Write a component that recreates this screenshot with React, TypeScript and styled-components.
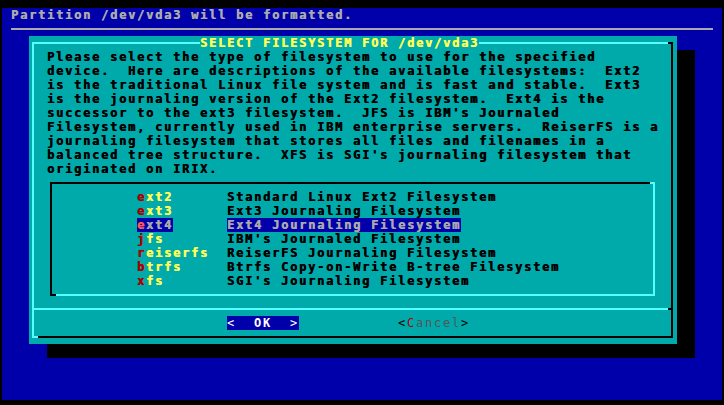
import React from "react";
import styled, { createGlobalStyle } from "styled-components";

const BLUE = "#0000aa";
const TEAL = "#00aaaa";
const LIGHT = "#55ffff";
const YELLOW = "#ffff55";
const GRAY = "#aaaaaa";
const RED = "#aa0000";
const LRED = "#ff5555";

const GlobalStyle = createGlobalStyle`
  html, body { margin: 0; padding: 0; background: #000; }
  body {
    width: 724px; height: 405px; overflow: hidden;
    font-family: "DejaVu Sans Mono", "Liberation Mono", monospace;
  }
`;

const Screen = styled.div`
  margin: 8px 0 0 2px;
  width: 720px;
  height: 392px;
  background: ${BLUE};
  display: flex;
  flex-direction: column;
  font-size: 12px;
  line-height: 14px;
  letter-spacing: 1.776px;
  font-weight: bold;
  white-space: pre;
  text-shadow: 0.6px 0 0 currentColor;
`;

const Backtitle = styled.div`
  height: 14px;
  padding-left: 9px;
  color: ${GRAY};
`;

const Rule = styled.div`
  height: 14px;
  display: flex;
  align-items: flex-start;
  padding: 0 9px;
  &::before {
    content: "";
    flex: 1;
    margin-top: 6px;
    height: 2px;
    background: ${GRAY};
  }
`;

const Dialog = styled.div`
  margin-left: 27px;
  width: 648px;
  height: 308px;
  box-sizing: border-box;
  padding: 6px 4px 6px 3px;
  background: ${TEAL};
  box-shadow: 18px 14px 0 0 #000;
  display: flex;
`;

const Frame = styled.div`
  flex: 1;
  position: relative;
  border-style: solid;
  border-width: 2px;
  border-color: ${LIGHT} #000 #000 ${LIGHT};
  display: flex;
  flex-direction: column;
  &::before {
    content: "";
    position: absolute;
    top: -2px;
    right: -2px;
    width: 5px;
    height: 2px;
    background: #000;
  }
  &::after {
    content: "";
    position: absolute;
    bottom: -2px;
    left: -2px;
    width: 6px;
    height: 2px;
    background: ${LIGHT};
  }
`;

const TitleRow = styled.div`
  height: 14px;
  margin-top: -8px;
  padding-left: 166px;
  display: flex;
`;

const Title = styled.span`
  background: ${TEAL};
  color: ${YELLOW};
`;

const Prose = styled.div`
  height: 126px;
  padding-left: 13px;
  color: #000;
`;

const ListArea = styled.div`
  height: 126px;
  width: 612px;
  margin-left: 13px;
  box-sizing: border-box;
  padding: 6px 4px 6px 3px;
  display: flex;
`;

const ListFrame = styled.div`
  flex: 1;
  position: relative;
  border-style: solid;
  border-width: 2px;
  border-color: #000 ${LIGHT} ${LIGHT} #000;
  padding-top: 6px;
  display: flex;
  flex-direction: column;
  &::before {
    content: "";
    position: absolute;
    top: -2px;
    right: -2px;
    width: 5px;
    height: 2px;
    background: ${LIGHT};
  }
  &::after {
    content: "";
    position: absolute;
    bottom: -2px;
    left: -2px;
    width: 6px;
    height: 2px;
    background: #000;
  }
`;

const Item = styled.div`
  height: 14px;
  padding-left: 85px;
  display: flex;
`;

const NameCell = styled.div`
  width: 90px;
  flex: none;
`;

const Name = styled.span<{ $sel: boolean }>`
  background: ${(p) => (p.$sel ? BLUE : "transparent")};
  color: ${(p) => (p.$sel ? GRAY : YELLOW)};
`;

const Hot = styled.span<{ $sel: boolean }>`
  color: ${(p) => (p.$sel ? LRED : RED)};
`;

const Desc = styled.span<{ $sel: boolean }>`
  background: ${(p) => (p.$sel ? BLUE : "transparent")};
  color: ${(p) => (p.$sel ? GRAY : "#000")};
`;

const Separator = styled.div`
  height: 14px;
  margin: 0 -2px;
  display: flex;
  align-items: flex-start;
`;

const SepLight = styled.div`
  flex: 1;
  margin-top: 6px;
  height: 2px;
  background: ${LIGHT};
`;

const SepDark = styled.div`
  width: 5px;
  margin-top: 6px;
  height: 2px;
  background: #000;
`;

const ButtonRow = styled.div`
  height: 14px;
  padding-left: 193px;
  display: flex;
  gap: 99px;
  font-weight: normal;
  text-shadow: none;
`;

const Button = styled.div<{ $active: boolean }>`
  width: 72px;
  height: 14px;
  background: ${(p) => (p.$active ? BLUE : "transparent")};
  color: ${(p) => (p.$active ? "#fff" : "#000")};
`;

const Label = styled.span<{ $active: boolean }>`
  color: ${(p) => (p.$active ? "#fff" : "#555555")};
  font-weight: ${(p) => (p.$active ? "bold" : "normal")};
`;

const Key = styled.span`
  color: ${RED};
`;

const proseLines = [
  "Please select the type of filesystem to use for the specified",
  "device.  Here are descriptions of the available filesystems:  Ext2",
  "is the traditional Linux file system and is fast and stable.  Ext3",
  "is the journaling version of the Ext2 filesystem.  Ext4 is the",
  "successor to the ext3 filesystem.  JFS is IBM's Journaled",
  "Filesystem, currently used in IBM enterprise servers.  ReiserFS is a",
  "journaling filesystem that stores all files and filenames in a",
  "balanced tree structure.  XFS is SGI's journaling filesystem that",
  "originated on IRIX.",
];

const items = [
  { name: "ext2", desc: "Standard Linux Ext2 Filesystem" },
  { name: "ext3", desc: "Ext3 Journaling Filesystem" },
  { name: "ext4", desc: "Ext4 Journaling Filesystem" },
  { name: "jfs", desc: "IBM's Journaled Filesystem" },
  { name: "reiserfs", desc: "ReiserFS Journaling Filesystem" },
  { name: "btrfs", desc: "Btrfs Copy-on-Write B-tree Filesystem" },
  { name: "xfs", desc: "SGI's Journaling Filesystem" },
];

const selected = 2;

export default function App() {
  return (
    <>
      <GlobalStyle />
      <Screen>
        <Backtitle>Partition /dev/vda3 will be formatted.</Backtitle>
        <Rule />
        <Dialog>
          <Frame>
            <TitleRow>
              <Title>SELECT FILESYSTEM FOR /dev/vda3</Title>
            </TitleRow>
            <Prose>
              {proseLines.map((l, i) => (
                <div key={i}>{l}</div>
              ))}
            </Prose>
            <ListArea>
              <ListFrame>
                {items.map((it, i) => {
                  const sel = i === selected;
                  return (
                    <Item key={it.name}>
                      <NameCell>
                        <Name $sel={sel}>
                          <Hot $sel={sel}>{it.name[0]}</Hot>
                          {it.name.slice(1)}
                        </Name>
                      </NameCell>
                      <Desc $sel={sel}>{it.desc}</Desc>
                    </Item>
                  );
                })}
              </ListFrame>
            </ListArea>
            <Separator>
              <SepLight />
              <SepDark />
            </Separator>
            <ButtonRow>
              <Button $active>
                {"<  "}
                <Label $active>OK</Label>
                {"  >"}
              </Button>
              <Button $active={false}>
                {"<"}
                <Key>C</Key>
                <Label $active={false}>ancel</Label>
                {">"}
              </Button>
            </ButtonRow>
          </Frame>
        </Dialog>
      </Screen>
    </>
  );
}
